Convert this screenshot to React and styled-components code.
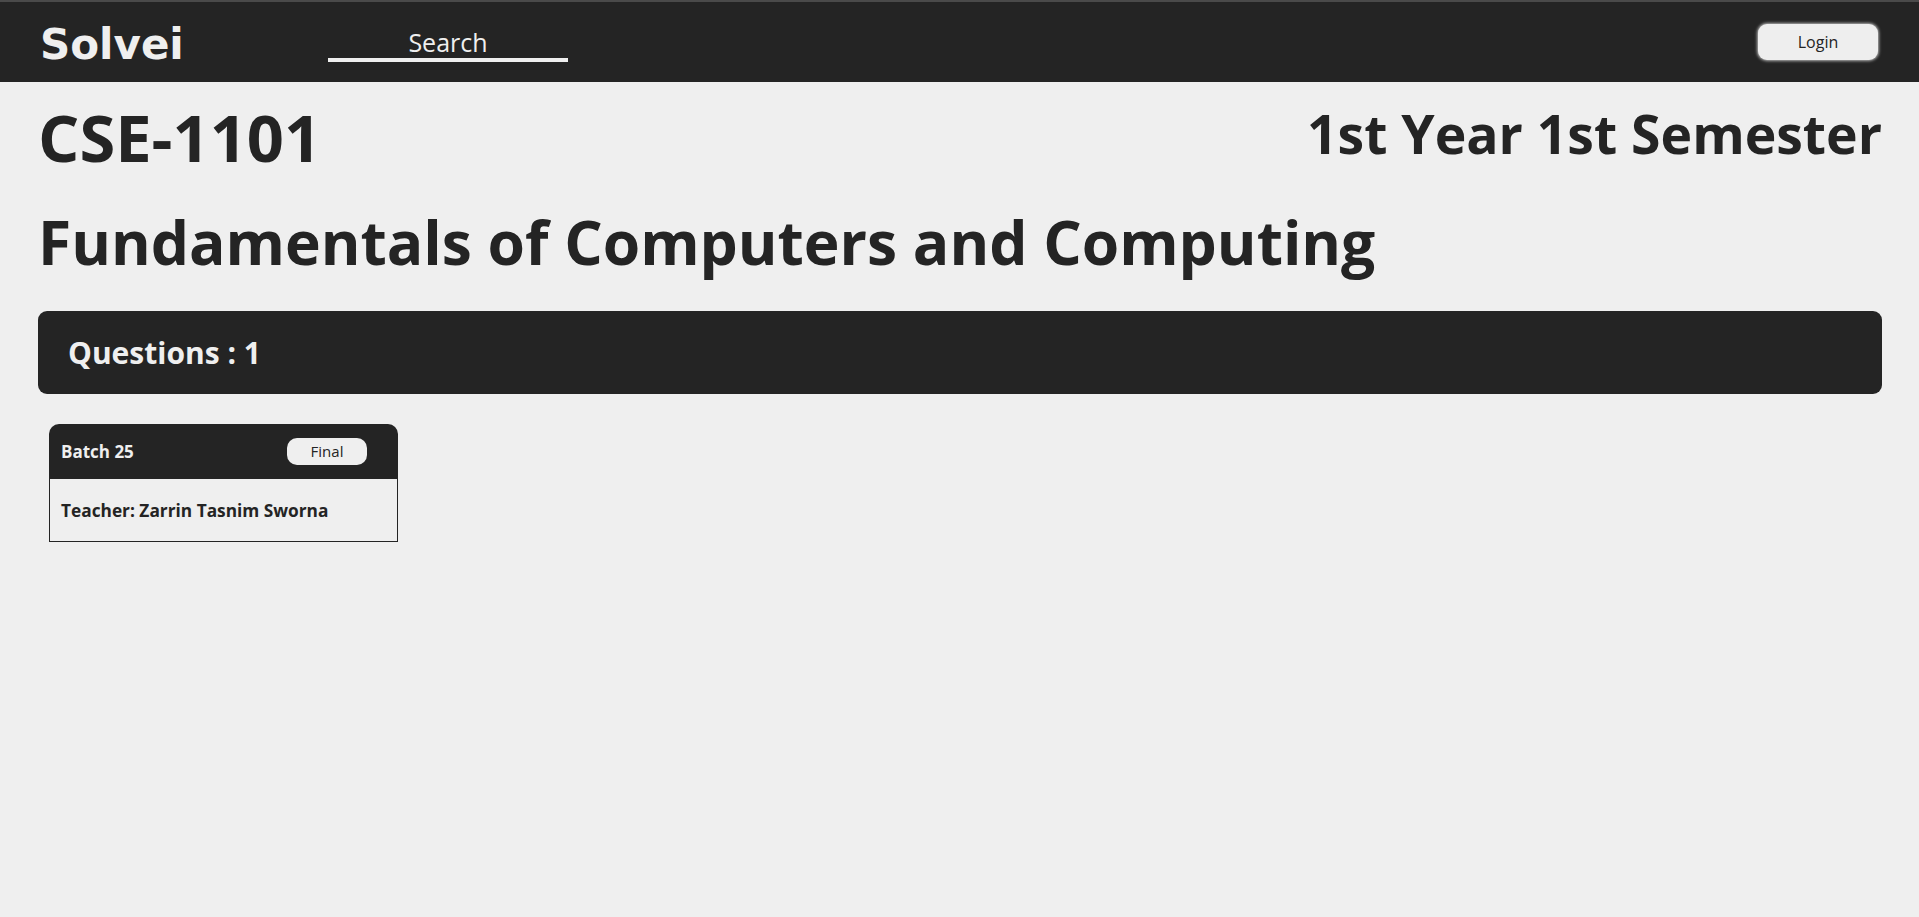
import React from "react";
import styled, { createGlobalStyle } from "styled-components";

const Global = createGlobalStyle`
  html, body { margin: 0; padding: 0; }
  body {
    background: #efefef;
    color: #242424;
    font-family: "Open Sans", "Noto Sans", sans-serif;
  }
  * { box-sizing: border-box; }
`;

const Header = styled.header`
  height: 82px;
  background: #242424;
  border-top: 2px solid #4a4a4a;
  display: flex;
  align-items: center;
  padding: 0 41px 0 40px;
`;

const Logo = styled.div`
  align-self: flex-start;
  margin-top: 22px;
  font-family: "DejaVu Sans", Verdana, sans-serif;
  font-weight: 700;
  font-size: 42px;
  color: #efefef;
  line-height: 1;
  width: 288px;
`;

const Search = styled.div`
  align-self: flex-start;
  margin-top: 25px;
  width: 240px;
  border-bottom: 4px solid #efefef;
  color: #efefef;
  font-size: 25px;
  text-align: center;
  line-height: 30px;
  padding-bottom: 1px;
`;

const LoginButton = styled.button`
  margin-left: auto;
  width: 120px;
  height: 36px;
  background: #eeeeee;
  color: #242424;
  border: none;
  border-radius: 9px;
  box-shadow: 0 0 3px 1px rgba(220, 220, 220, 0.8);
  font-family: "Open Sans", sans-serif;
  font-size: 16px;
  cursor: pointer;
`;

const Main = styled.main`
  padding: 0 37px 0 38px;
`;

const TitleRow = styled.div`
  display: flex;
  justify-content: space-between;
  align-items: flex-start;
`;

const CourseCode = styled.h1`
  margin: 16px 0 0 0;
  font-size: 65px;
  font-weight: 700;
  line-height: 1.2;
`;

const Semester = styled.h2`
  margin: 20px 0 0 0;
  font-size: 53.5px;
  font-weight: 700;
  line-height: 1.2;
`;

const CourseName = styled.h1`
  margin: 30px 0 0 0;
  font-size: 60.5px;
  font-weight: 700;
  line-height: 1.2;
`;

const QuestionBar = styled.div`
  margin-top: 32px;
  height: 83px;
  background: #242424;
  border-radius: 9px;
  display: flex;
  align-items: center;
  padding: 0 30px 0 30px;
  color: #efefef;
  font-size: 30px;
  font-weight: 700;
`;

const CardList = styled.div`
  display: flex;
  gap: 20px;
  padding: 30px 11px;
`;

const Card = styled.div`
  width: 349px;
`;

const CardHead = styled.div`
  height: 55px;
  background: #242424;
  border-radius: 10px 10px 0 0;
  display: flex;
  align-items: center;
  justify-content: space-between;
  padding: 0 31px 0 12px;
  color: #efefef;
`;

const Batch = styled.span`
  font-size: 17px;
  font-weight: 700;
`;

const Pill = styled.span`
  width: 80px;
  height: 27px;
  border-radius: 10px;
  background: #efefef;
  color: #242424;
  font-size: 15px;
  display: flex;
  align-items: center;
  justify-content: center;
`;

const CardBody = styled.div`
  height: 63px;
  border: 1px solid #242424;
  border-top: none;
  display: flex;
  align-items: center;
  padding: 2px 11px 0;
  font-size: 17.3px;
  font-weight: 700;
`;

export default function App() {
  return (
    <>
      <Global />
      <Header>
        <Logo>Solvei</Logo>
        <Search>Search</Search>
        <LoginButton>Login</LoginButton>
      </Header>
      <Main>
        <TitleRow>
          <CourseCode>CSE-1101</CourseCode>
          <Semester>1st Year 1st Semester</Semester>
        </TitleRow>
        <CourseName>Fundamentals of Computers and Computing</CourseName>
        <QuestionBar>Questions : 1</QuestionBar>
        <CardList>
          <Card>
            <CardHead>
              <Batch>Batch 25</Batch>
              <Pill>Final</Pill>
            </CardHead>
            <CardBody>Teacher: Zarrin Tasnim Sworna</CardBody>
          </Card>
        </CardList>
      </Main>
    </>
  );
}
